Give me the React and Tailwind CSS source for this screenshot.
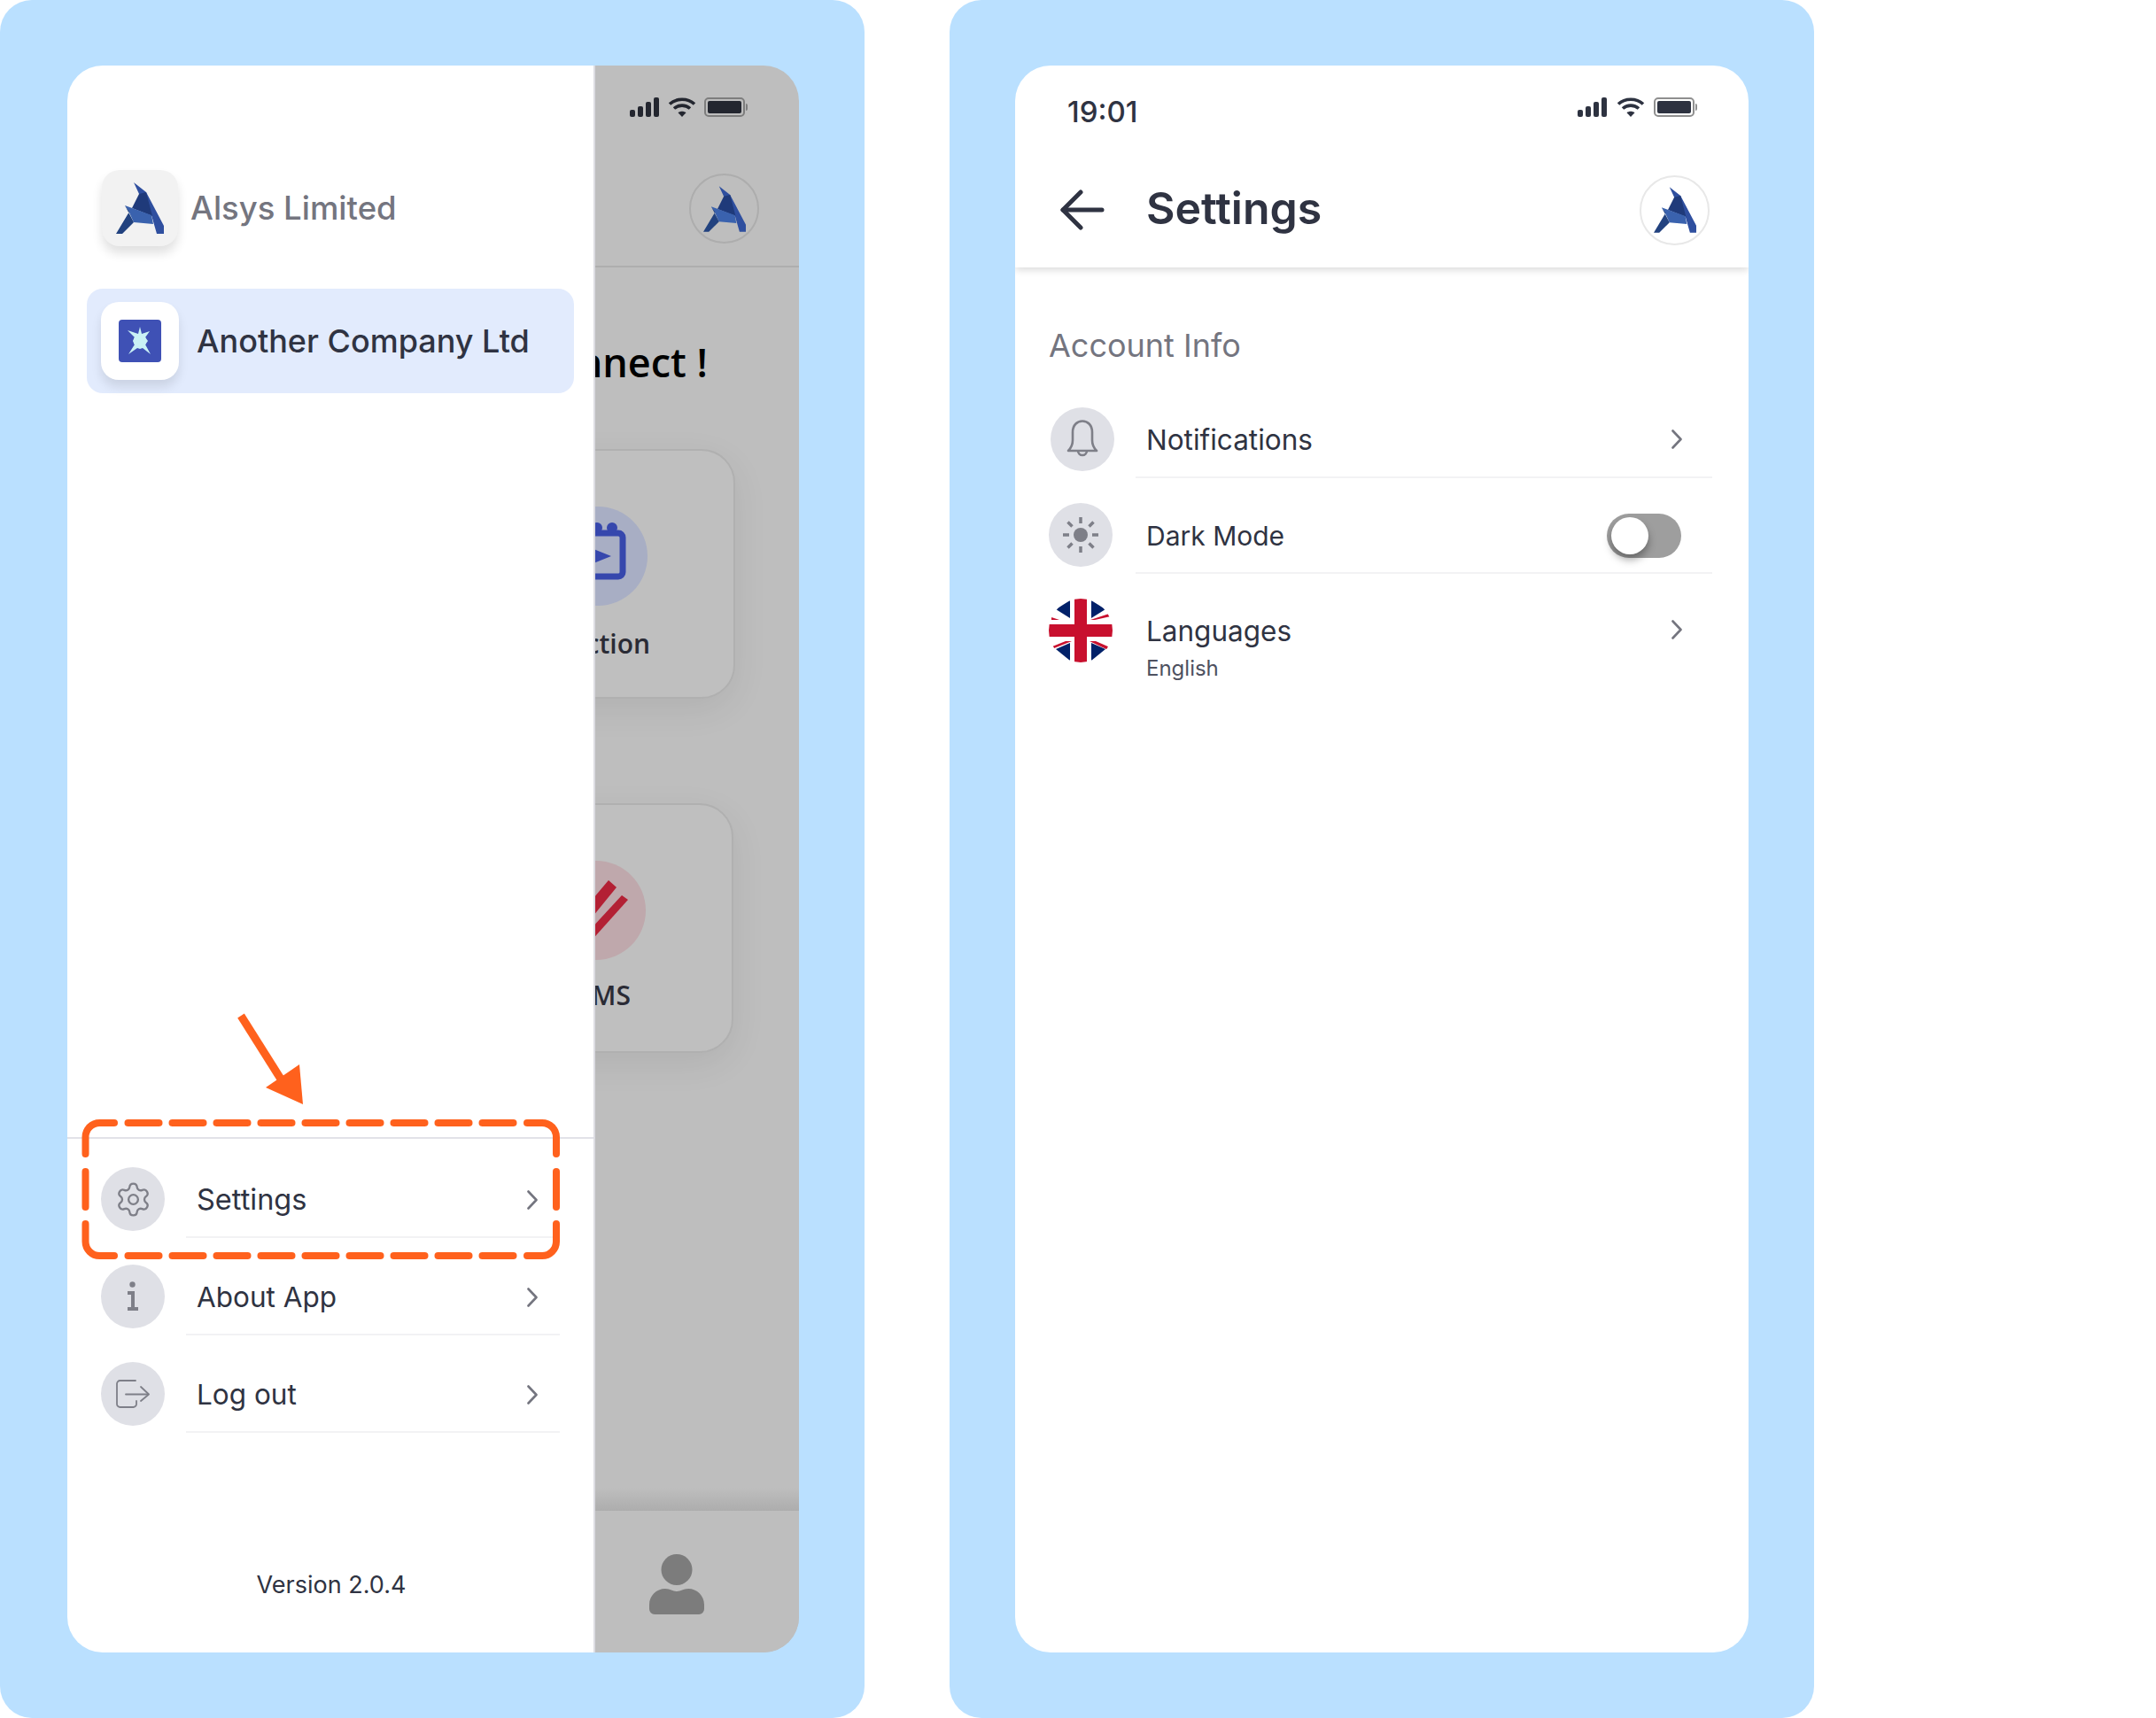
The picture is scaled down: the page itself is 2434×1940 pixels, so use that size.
import { Settings as Gear } from 'lucide-react'

function LogoA({ className }) {
  return (
    <svg viewBox="0 0 54 58" className={className}>
      <polygon points="20,0 34,11 54,49 54,58 46,58 40,37 26,13" fill="#2f4f9f" />
      <polygon points="26,13 34,11 41,38 18,29" fill="#1f3a7a" />
      <polygon points="10,26 40,37 42,47 20,45 14,32" fill="#3a62ae" />
      <polygon points="10,26 20,45 7,58 0,58 15,33" fill="#22427f" />
    </svg>
  )
}

function Signal({ color = '#2d3240' }) {
  return (
    <svg width="34" height="22" viewBox="0 0 34 22" fill={color}>
      <rect x="0" y="14" width="6" height="8" rx="2" />
      <rect x="9" y="10" width="6" height="12" rx="2" />
      <rect x="18" y="5" width="6" height="17" rx="2" />
      <rect x="27" y="0" width="6" height="22" rx="2" />
    </svg>
  )
}

function Wifi({ color = '#2d3240' }) {
  return (
    <svg width="32" height="22" viewBox="0 0 32 22" fill="none" stroke={color} strokeWidth="3.6">
      <path d="M2 7.5C9.5 0.5 22.5 0.5 30 7.5" />
      <path d="M7 12.5C12 8 20 8 25 12.5" />
      <path d="M16 22L11.5 17.2C14 15.2 18 15.2 20.5 17.2Z" fill={color} stroke="none" />
    </svg>
  )
}

function Battery({ color = '#2d3240', edge = '#8f8f8f' }) {
  return (
    <div className="flex items-center gap-[1px]">
      <div className="flex h-[22px] w-[46px] rounded-[5px] border-2 p-[2px]" style={{ borderColor: edge }}>
        <div className="h-full w-full rounded-[2px]" style={{ background: color }} />
      </div>
      <div className="h-[8px] w-[2px] rounded-r-full" style={{ background: edge }} />
    </div>
  )
}

function Chevron() {
  return (
    <svg width="12" height="22" viewBox="0 0 12 22" fill="none" stroke="#74757f" strokeWidth="2.6" strokeLinecap="round" strokeLinejoin="round">
      <path d="M1.5 1.5L10.5 11L1.5 20.5" />
    </svg>
  )
}

function IconCircle({ children, className = '' }) {
  return (
    <div className={`flex h-[72px] w-[72px] shrink-0 items-center justify-center rounded-full bg-[#dfe0e6] ${className}`}>
      {children}
    </div>
  )
}

function InfoGlyph() {
  return (
    <svg width="14" height="34" viewBox="0 0 14 34" fill="#7e7f88">
      <circle cx="6.5" cy="3.5" r="3.2" />
      <path d="M1 11H9V29H13V33H1V29H5V15H1Z" />
    </svg>
  )
}

function LogoutGlyph() {
  return (
    <svg width="38" height="32" viewBox="0 0 38 32" fill="none" stroke="#7e7f88" strokeWidth="1.8" strokeLinecap="round" strokeLinejoin="round">
      <path d="M22 1H4.5A3.5 3.5 0 0 0 1 4.5V27.5A3.5 3.5 0 0 0 4.5 31H19.5A3.5 3.5 0 0 0 23 27.5V24" />
      <path d="M11 16.5H36" />
      <path d="M28 8L37 16.5L28 24" />
    </svg>
  )
}

function BellGlyph() {
  return (
    <svg width="36" height="44" viewBox="0 0 36 44" fill="none" stroke="#7e7f88" strokeWidth="2.6" strokeLinejoin="round">
      <path d="M2 35C5 32 7 28 7 23V14C7 6 12 1.5 18 1.5S29 6 29 14V23C29 28 31 32 34 35Z" />
      <path d="M13 35A5 5 0 0 0 23 35" />
    </svg>
  )
}

function SunGlyph() {
  return (
    <svg width="40" height="40" viewBox="0 0 40 40" fill="#7e7f88" stroke="#7e7f88" strokeWidth="3.5">
      <circle cx="20" cy="20" r="8" stroke="none" />
      <path d="M20 0V7M20 33V40M0 20H7M33 20H40M5.5 5.5L10.5 10.5M29.5 29.5L34.5 34.5M34.5 5.5L29.5 10.5M10.5 29.5L5.5 34.5" fill="none" />
    </svg>
  )
}

function FlagUk() {
  return (
    <svg width="72" height="72" viewBox="0 0 72 72" className="shrink-0 rounded-full">
      <rect width="72" height="72" fill="#fff" />
      <polygon points="8,12 24,2 24,22" fill="#012169" />
      <polygon points="48,2 64,12 48,22" fill="#012169" />
      <polygon points="8,57 24,50 24,70" fill="#012169" />
      <polygon points="48,50 64,57 48,70" fill="#012169" />
      <polygon points="3,21 12,24 3,24" fill="#c8102e" />
      <polygon points="68,17 70,20 52,24 47,24" fill="#c8102e" />
      <polygon points="19,48 26,48 6,56 4,54" fill="#c8102e" />
      <polygon points="53,48 46,48 67,58 69,55" fill="#c8102e" />
      <rect x="29" width="14" height="72" fill="#c8102e" />
      <rect y="29" width="72" height="14" fill="#c8102e" />
    </svg>
  )
}

function DashedFrame() {
  const starts = [141.5, 191.5, 241.5, 291.5, 341.5, 391.5, 441.5, 491.5, 541.5]
  return (
    <svg width="976" height="1940" className="pointer-events-none absolute left-0 top-0" fill="none" stroke="#ff611d" strokeWidth="8">
      {starts.map((x) => (
        <g key={x} strokeLinecap="round">
          <path d={`M${x + 3} 1268H${x + 38}`} />
          <path d={`M${x + 3} 1418H${x + 38}`} />
        </g>
      ))}
      <g strokeLinecap="round">
        <path d="M96.5 1303V1284A16 16 0 0 1 112.5 1268H129" />
        <path d="M96.5 1382V1402A16 16 0 0 0 112.5 1418H129" />
        <path d="M96.5 1323V1363" />
        <path d="M595 1268H612A16 16 0 0 1 628 1284V1303" />
        <path d="M595 1418H612A16 16 0 0 0 628 1402V1382" />
        <path d="M628 1323V1363" />
      </g>
      <path d="M272 1147L318 1220" strokeWidth="9" />
      <polygon points="338,1202 300,1228 342,1247" fill="#ff611d" stroke="none" />
    </svg>
  )
}

function MenuRow({ icon, label, textSize = 'text-[31.5px]' }) {
  return (
    <div className="flex h-[110px] items-end pl-[38px]">
      <IconCircle className="mb-[8px]">{icon}</IconCircle>
      <div className="ml-[24px] mr-[38px] flex h-[80px] flex-1 items-center justify-between border-b-2 border-[#f2f2f4] pb-[4px] pl-[12px] pr-[25px]">
        <span className={`${textSize} text-[#2f3342]`}>{label}</span>
        <Chevron />
      </div>
    </div>
  )
}

function Drawer() {
  return (
    <aside className="flex h-full w-[596px] shrink-0 flex-col border-r-2 border-[#dcdce2] bg-white pt-[118px]">
      <div className="ml-[39px] flex items-center gap-[14px]">
        <div className="flex h-[86px] w-[86px] items-center justify-center rounded-[20px] bg-[#f2f2f2] shadow-[0_8px_12px_rgba(0,0,0,0.12)]">
          <LogoA className="h-[58px] w-[54px]" />
        </div>
        <span className="text-[36.5px] font-medium text-[#74757f]">Alsys Limited</span>
      </div>
      <div className="ml-[22px] mt-[48px] flex h-[118px] w-[550px] items-center gap-[20px] rounded-[18px] bg-[#e2ebfd] pl-[16px]">
        <div className="flex h-[88px] w-[88px] items-center justify-center rounded-[20px] bg-white shadow-[0_8px_12px_rgba(0,0,0,0.1)]">
          <svg width="48" height="48" viewBox="0 0 48 48">
            <rect width="48" height="48" rx="4" fill="#3f51b5" />
            <polygon points="24,8 26,16 35,13 30,20 33,24 30,28 36,39 27,32 24,33 21,32 11,39 18,28 16,24 18,20 10,12 22,16" fill="#c9f1f5" />
            <circle cx="24" cy="24" r="7.5" fill="#c9f1f5" />
          </svg>
        </div>
        <span className="text-[36px] font-medium text-[#2f3342]">Another Company Ltd</span>
      </div>
      <div className="flex-1" />
      <div className="h-[2px] bg-[#e2e2e8]" />
      <div className="pt-[2px]">
        <MenuRow icon={<Gear size={43} strokeWidth={1.3} color="#7e7f88" />} label="Settings" textSize="text-[32.5px]" />
        <MenuRow icon={<InfoGlyph />} label="About App" />
        <MenuRow icon={<LogoutGlyph />} label="Log out" />
      </div>
      <p className="mb-[56px] mt-[152px] pl-[2px] text-center text-[27px] leading-[40px] text-[#2f3342]">Version 2.0.4</p>
    </aside>
  )
}

function BackCard({ mr, top, circle, label, labelClass, children }) {
  return (
    <div
      className={`flex h-[282px] w-[310px] shrink-0 flex-col items-center self-end rounded-[38px] border-2 border-[#b0b0b0] bg-[#bfbfbf] pt-[63px] shadow-[0_12px_40px_rgba(0,0,0,0.07)] ${mr} ${top}`}
    >
      <div className={`flex h-[112px] w-[112px] items-center justify-center rounded-full ${circle}`}>{children}</div>
      <p className={`self-end whitespace-nowrap font-['Open_Sans',sans-serif] text-[30px] font-semibold leading-[40px] text-[#2a2b35] ${labelClass}`}>
        {label}
      </p>
    </div>
  )
}

function BackPane() {
  return (
    <section className="flex h-full min-w-0 flex-1 flex-col overflow-hidden bg-[#bebebe]">
      <header className="h-[228px] shrink-0 border-b-2 border-[#aeaeae] pr-[58px]">
        <div className="flex items-center justify-end gap-[9px] pt-[36px]">
          <Signal color="#23262f" />
          <Wifi color="#23262f" />
          <Battery color="#23262f" edge="#7d7d7d" />
        </div>
        <div className="mr-[-13px] mt-[64px] flex justify-end">
          <div className="flex h-[79px] w-[79px] items-center justify-center rounded-full border-2 border-[#adadad]">
            <LogoA className="h-[52px] w-[48px]" />
          </div>
        </div>
      </header>
      <div className="flex flex-1 flex-col">
        <h2 className="mt-[77px] self-end whitespace-nowrap pr-[103px] font-['Open_Sans',sans-serif] text-[45px] font-semibold leading-[60px] text-black">
          Connect !
        </h2>
        <BackCard mr="mr-[72px]" top="mt-[68px]" circle="bg-[#a8aec4]" label="ction" labelClass="mr-[94px] mt-[23px]">
          <svg width="112" height="112" viewBox="0 0 112 112" fill="none" stroke="#3647ad" strokeWidth="7">
            <rect x="25" y="30" width="59" height="49" rx="5" />
            <circle cx="55" cy="24" r="6" fill="#3647ad" stroke="none" />
            <circle cx="72" cy="24" r="6" fill="#3647ad" stroke="none" />
            <path d="M36 42L71 56L36 70Z" fill="#3647ad" stroke="none" />
          </svg>
        </BackCard>
        <BackCard mr="mr-[74px]" top="mt-[118px]" circle="bg-[#bfa8ac]" label="MS" labelClass="mr-[114px] mt-[20px]">
          <svg width="112" height="112" viewBox="0 0 112 112" fill="#b32034">
            <polygon points="70,22 79,30 48,68 48,48" />
            <polygon points="85,39 92,44 48,93 48,79" />
          </svg>
        </BackCard>
        <div className="mt-auto h-[26px] bg-gradient-to-b from-[#bebebe] to-[#adadad]" />
      </div>
      <footer className="flex h-[160px] shrink-0 flex-col items-center bg-[#bebebe] pr-[46px] pt-[49px]">
        <svg width="62" height="68" viewBox="0 0 62 68" fill="#7c7c7c">
          <circle cx="31" cy="17.5" r="17.5" />
          <path d="M18 39C24 39 26 42 31 42S38 39 44 39C54 39 62 47 62 57V62A6 6 0 0 1 56 68H6A6 6 0 0 1 0 62V57C0 47 8 39 18 39Z" />
        </svg>
      </footer>
    </section>
  )
}

function SettingRow({ icon, label, right, sub, border = true, textSize = 'text-[31.5px]' }) {
  return (
    <div className="flex h-[108px] items-end">
      {icon}
      <div className={`ml-[26px] mr-[41px] flex h-[80px] flex-1 items-center justify-between pl-[12px] pr-[34px] ${border ? 'border-b-2 border-[#f2f2f4] pb-[4px]' : ''}`}>
        <div className={sub ? 'mt-[32px]' : ''}>
          <p className={`${textSize} leading-[40px] text-[#2f3342]`}>{label}</p>
          {sub && <p className="mt-[5px] text-[24px] leading-[34px] text-[#4e5160]">{sub}</p>}
        </div>
        {right}
      </div>
    </div>
  )
}

function Toggle() {
  return (
    <div className="mr-[1px] flex h-[50px] w-[84px] items-center rounded-full bg-[#9e9e9e] pl-[5px]">
      <div className="h-[42px] w-[42px] rounded-full bg-white shadow-[0_6px_10px_rgba(0,0,0,0.35)]" />
    </div>
  )
}

function SettingsScreen() {
  return (
    <div className="h-[1792px] w-[828px] overflow-hidden rounded-[40px] bg-white">
      <header className="relative h-[228px] pt-[28px] shadow-[0_3px_8px_rgba(0,0,0,0.14)]">
        <div className="flex h-[48px] items-center justify-between pl-[59px] pr-[58px]">
          <span className="mt-[2px] text-[33px] font-medium text-[#2f3342]">19:01</span>
          <div className="mb-[10px] flex items-center gap-[10px]">
            <Signal />
            <Wifi />
            <Battery />
          </div>
        </div>
        <div className="mt-[47px] flex h-[80px] items-center pl-[51px] pr-[44px]">
          <svg width="50" height="46" viewBox="0 0 50 46" fill="none" stroke="#2f3342" strokeWidth="5" strokeLinecap="round" strokeLinejoin="round">
            <path d="M3 23H47" />
            <path d="M23 3L3 23L23 43" />
          </svg>
          <h1 className="mb-[3px] ml-[47px] flex-1 text-[50px] font-semibold text-[#2f3342]">Settings</h1>
          <div className="flex h-[79px] w-[79px] items-center justify-center rounded-full border-2 border-[#e8e8e8]">
            <LogoA className="h-[52px] w-[48px]" />
          </div>
        </div>
      </header>
      <div className="pl-[38px] pt-[68px]">
        <p className="text-[36px] leading-[40px] text-[#74757f]">Account Info</p>
        <div className="mt-[22px]">
          <SettingRow
            icon={<IconCircle className="mb-[8px] ml-[2px] mr-[-2px]"><BellGlyph /></IconCircle>}
            label="Notifications"
            right={<div className="mb-[2px]"><Chevron /></div>}
          />
          <SettingRow icon={<IconCircle className="mb-[8px]"><SunGlyph /></IconCircle>} label="Dark Mode" textSize="text-[30px]" right={<Toggle />} />
          <SettingRow
            icon={<div className="mb-[8px]"><FlagUk /></div>}
            label="Languages"
            sub="English"
            border={false}
            right={<div className="mb-[10px]"><Chevron /></div>}
          />
        </div>
      </div>
    </div>
  )
}

export default function App() {
  return (
    <div className="flex h-[1940px] w-[2434px] gap-[96px] bg-white font-['Inter',sans-serif]">
      <div className="relative h-full w-[976px] rounded-[36px] bg-[#bae0ff] pl-[76px] pt-[74px]">
        <div className="flex h-[1792px] w-[826px] overflow-hidden rounded-[40px]">
          <Drawer />
          <BackPane />
        </div>
        <DashedFrame />
      </div>
      <div className="h-full w-[976px] rounded-[36px] bg-[#bae0ff] pl-[74px] pt-[74px]">
        <SettingsScreen />
      </div>
    </div>
  )
}
